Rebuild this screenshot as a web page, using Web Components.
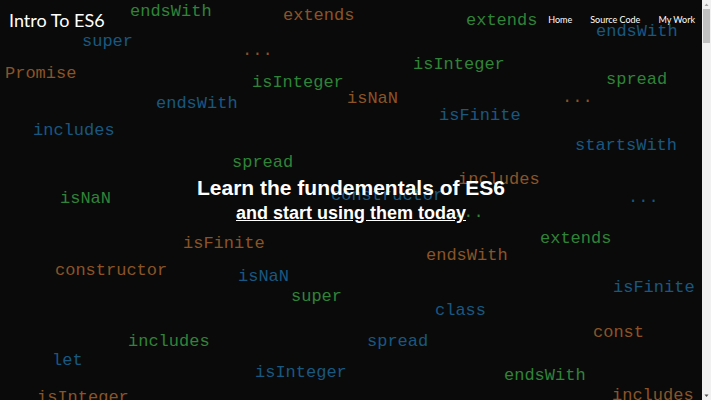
<!DOCTYPE html>
<html lang="en">
<head>
<meta charset="utf-8">
<title>Intro To ES6</title>
<style>
html, body { height: 100%; margin: 0; }
body { background: #0a0a0a; color: #fff; font-family: Lato, sans-serif; overflow: hidden; }
</style>
</head>
<body>
<intro-page>
  <site-header slot="header" brand="Intro To ES6">
    <nav-link href="#home">Home</nav-link>
    <nav-link href="#source">Source Code</nav-link>
    <nav-link href="#work">My Work</nav-link>
  </site-header>
  <hero-title>
    Learn the fundementals of ES6
    <span slot="sub">and start using them today</span>
  </hero-title>
</intro-page>
<script>
const define = (name, html, setup) => {
  const template = document.createElement('template');
  template.innerHTML = html;
  customElements.define(name, class extends HTMLElement {
    constructor() {
      super();
      this.attachShadow({ mode: 'open' }).append(template.content.cloneNode(true));
    }
    connectedCallback() { if (setup) setup(this, this.shadowRoot); }
  });
};

// text, colour, left, baseline
const WORDS = [
  ['endsWith', 'g', 130, 17], ['super', 'b', 82, 47], ['Promise', 'o', 5, 79],
  ['endsWith', 'b', 156, 109], ['includes', 'b', 33, 136], ['extends', 'o', 283, 21],
  ['...', 'o', 242, 56], ['isInteger', 'g', 252, 88], ['isNaN', 'o', 347, 104],
  ['isInteger', 'g', 413, 70], ['isFinite', 'b', 439, 121], ['extends', 'g', 466, 26],
  ['endsWith', 'b', 596, 37], ['spread', 'g', 606, 85], ['...', 'o', 562, 103],
  ['startsWith', 'b', 575, 151], ['includes', 'o', 458, 185], ['...', 'b', 628, 203],
  ['extends', 'g', 540, 244], ['endsWith', 'o', 426, 261], ['spread', 'g', 232, 168],
  ['constructor', 'b', 331, 201], ['...', 'g', 453, 218], ['isNaN', 'g', 60, 204],
  ['isFinite', 'o', 183, 249], ['constructor', 'o', 55, 276], ['includes', 'g', 128, 347],
  ['let', 'b', 52, 366], ['isInteger', 'o', 37, 403], ['isNaN', 'b', 238, 282],
  ['super', 'g', 291, 302], ['class', 'b', 435, 316], ['spread', 'b', 367, 347],
  ['isInteger', 'b', 255, 378], ['isFinite', 'b', 613, 293], ['const', 'o', 593, 338],
  ['endsWith', 'g', 504, 381], ['includes', 'o', 612, 401]
];

define('keyword-cloud', `
  <style>
    :host { display: block; position: absolute; inset: 0; overflow: hidden;
      font: 17px/19px "Liberation Mono", monospace; }
    span { position: absolute; white-space: pre; }
    .g { color: #308338; } .b { color: #185881; } .o { color: #8a5427; }
  </style>`, (host, root) => {
  for (const [text, tone, x, baseline] of WORDS) {
    const word = document.createElement('span');
    word.className = tone;
    word.textContent = text;
    word.style.left = x + 'px';
    word.style.top = baseline - 15 + 'px';
    root.append(word);
  }
});

define('nav-link', `
  <style>
    :host { display: block; font-size: 9px; line-height: 16px; }
    a { color: inherit; text-decoration: none; white-space: nowrap; }
  </style>
  <a><slot></slot></a>`, (host, root) => {
  root.querySelector('a').href = host.getAttribute('href');
});

define('site-header', `
  <style>
    :host { display: flex; justify-content: space-between; align-items: center; padding: 8px 7px 8px 9px; }
    .brand { font-size: 18px; line-height: 24px; color: inherit; text-decoration: none; }
    nav { display: flex; gap: 18px; }
  </style>
  <a class="brand" href="#"></a>
  <nav><slot></slot></nav>`, (host, root) => {
  root.querySelector('.brand').textContent = host.getAttribute('brand');
});

define('hero-title', `
  <style>
    :host { display: block; text-align: center; font-family: "Liberation Sans", Arial, sans-serif; }
    h1, h2 { margin: 0; font-weight: bold; }
    h1 { font-size: 21px; line-height: 26px; }
    h2 { font-size: 18px; line-height: 24px; text-decoration: underline; }
  </style>
  <h1><slot></slot></h1>
  <h2><slot name="sub"></slot></h2>`);

define('scroll-track', `
  <style>
    :host { display: flex; flex-direction: column; background: #f1f1f1; }
    svg { display: block; width: 100%; height: 9px; }
    .track { flex: 1; padding: 0 1px; }
    .thumb { height: 9%; background: #c1c1c1; }
  </style>
  <svg viewBox="0 0 9 9" aria-hidden="true"><path d="M2.5 6 4.5 3.5 6.5 6Z" fill="#a3a3a3"/></svg>
  <div class="track"><div class="thumb"></div></div>
  <svg viewBox="0 0 9 9" aria-hidden="true"><path d="M2.5 3.5 4.5 6 6.5 3.5Z" fill="#505050"/></svg>`);

define('intro-page', `
  <style>
    :host { display: grid; grid-template-columns: 1fr 9px; height: 100vh; }
    .view { position: relative; display: grid; grid-template-rows: auto 1fr auto; background: #0a0a0a; min-width: 0; }
    header, main { position: relative; }
    main { align-self: center; padding-bottom: 40px; }
  </style>
  <div class="view">
    <keyword-cloud></keyword-cloud>
    <header><slot name="header"></slot></header>
    <main><slot></slot></main>
  </div>
  <scroll-track></scroll-track>`);
</script>
</body>
</html>
